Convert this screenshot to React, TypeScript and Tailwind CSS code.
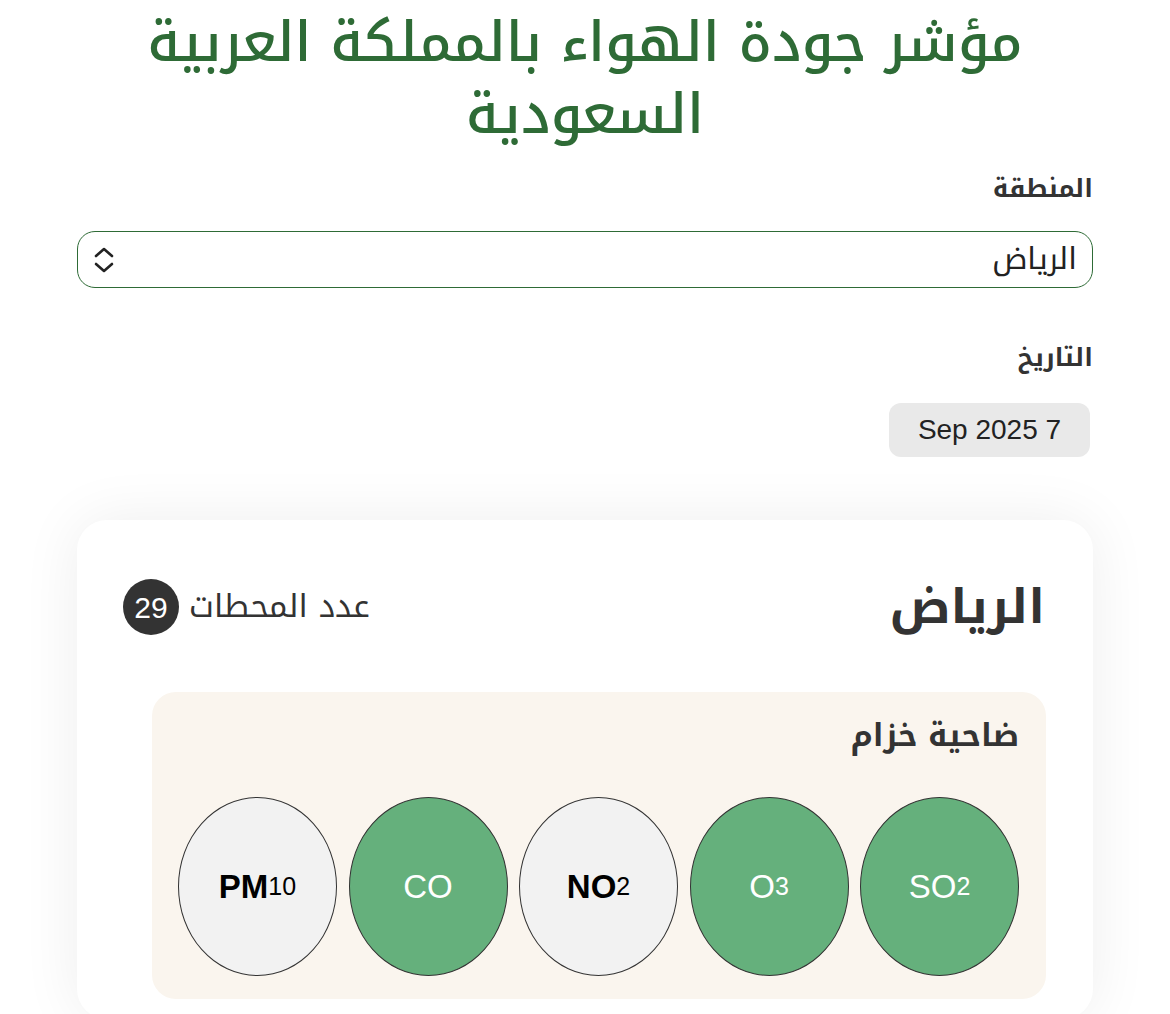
import React from "react";

const AR = { fontFamily: '"Noto Kufi Arabic", "Noto Sans Arabic", "DejaVu Sans", sans-serif' };
const LAT = { fontFamily: '"Liberation Sans", Arial, sans-serif' };

type P = { name: string; sub?: string; green: boolean };

const pollutants: P[] = [
  { name: "SO", sub: "2", green: true },
  { name: "O", sub: "3", green: true },
  { name: "NO", sub: "2", green: false },
  { name: "CO", green: true },
  { name: "PM", sub: "10", green: false },
];

function Bubble({ p }: { p: P }) {
  return (
    <div
      className={
        p.green
          ? "w-[159px] h-[179px] rounded-[50%] border border-[#333] bg-[#65b07c] text-white flex items-center justify-center"
          : "w-[159px] h-[179px] rounded-[50%] border border-[#333] bg-[#f2f2f2] text-black flex items-center justify-center"
      }
      dir="ltr"
      style={LAT}
    >
      <span className={p.green ? "text-[33px] leading-none" : "text-[33px] leading-none font-bold"}>{p.name}</span>
      {p.sub && <span className="text-[25px] leading-none">{p.sub}</span>}
    </div>
  );
}

export default function App() {
  return (
    <div dir="rtl" className="w-[1170px] min-h-[1014px] bg-white overflow-hidden" style={AR}>
      <div className="mx-[77px]">
        <h1 className="text-center text-[#2e6b36] text-[55px] leading-[72px] pt-[7px] px-[40px] font-medium">
          مؤشر جودة الهواء بالمملكة العربية السعودية
        </h1>

        <div className="mt-[20px] text-[25px] font-bold text-[#333] leading-[36px]">المنطقة</div>

        <div className="mt-[24px] h-[57px] rounded-[18px] border border-[#2e6b36] flex items-center justify-between pr-[15px] pl-[14px]">
          <span className="text-[30px] text-[#222]">الرياض</span>
          <svg width="24" height="28" viewBox="0 0 24 28" fill="none" stroke="#222" strokeWidth="2.6" strokeLinecap="round" strokeLinejoin="round">
            <path d="M4 10 L12 3 L20 10" />
            <path d="M4 18 L12 25 L20 18" />
          </svg>
        </div>

        <div className="mt-[52px] text-[25px] font-bold text-[#333] leading-[36px]">التاريخ</div>

        <div className="mt-[27px] flex">
          <div className="w-[201px] h-[54px] rounded-[12px] bg-[#e9e9e9] mr-[3px] flex items-center justify-center text-[28px] text-[#222]" dir="ltr" style={LAT}>
            Sep 2025 7
          </div>
        </div>

        <div className="mt-[63px] bg-white rounded-[30px] shadow-[0_0_60px_rgba(0,0,0,0.07)] pt-[56px] pb-[20px]">
          <div className="flex items-center justify-between pr-[48px] pl-[46px]">
            <div className="text-[48px] font-bold text-[#333] leading-[62px]">الرياض</div>
            <div className="flex items-center gap-[10px]">
              <span className="text-[32px] text-[#333]">عدد المحطات</span>
              <span className="w-[56px] h-[56px] rounded-full bg-[#333] text-white flex items-center justify-center text-[30px] font-medium" style={LAT}>
                29
              </span>
            </div>
          </div>

          <div className="mt-[54px] mr-[47px] ml-[75px] rounded-[24px] bg-[#faf5ee] pt-[22px] pb-[23px] pr-[27px] pl-[26px]">
            <div className="text-[31px] font-bold text-[#333] leading-[44px]">ضاحية خزام</div>
            <div className="mt-[39px] flex justify-between">
              {pollutants.map((p, i) => (
                <Bubble key={i} p={p} />
              ))}
            </div>
          </div>
        </div>
      </div>
    </div>
  );
}
